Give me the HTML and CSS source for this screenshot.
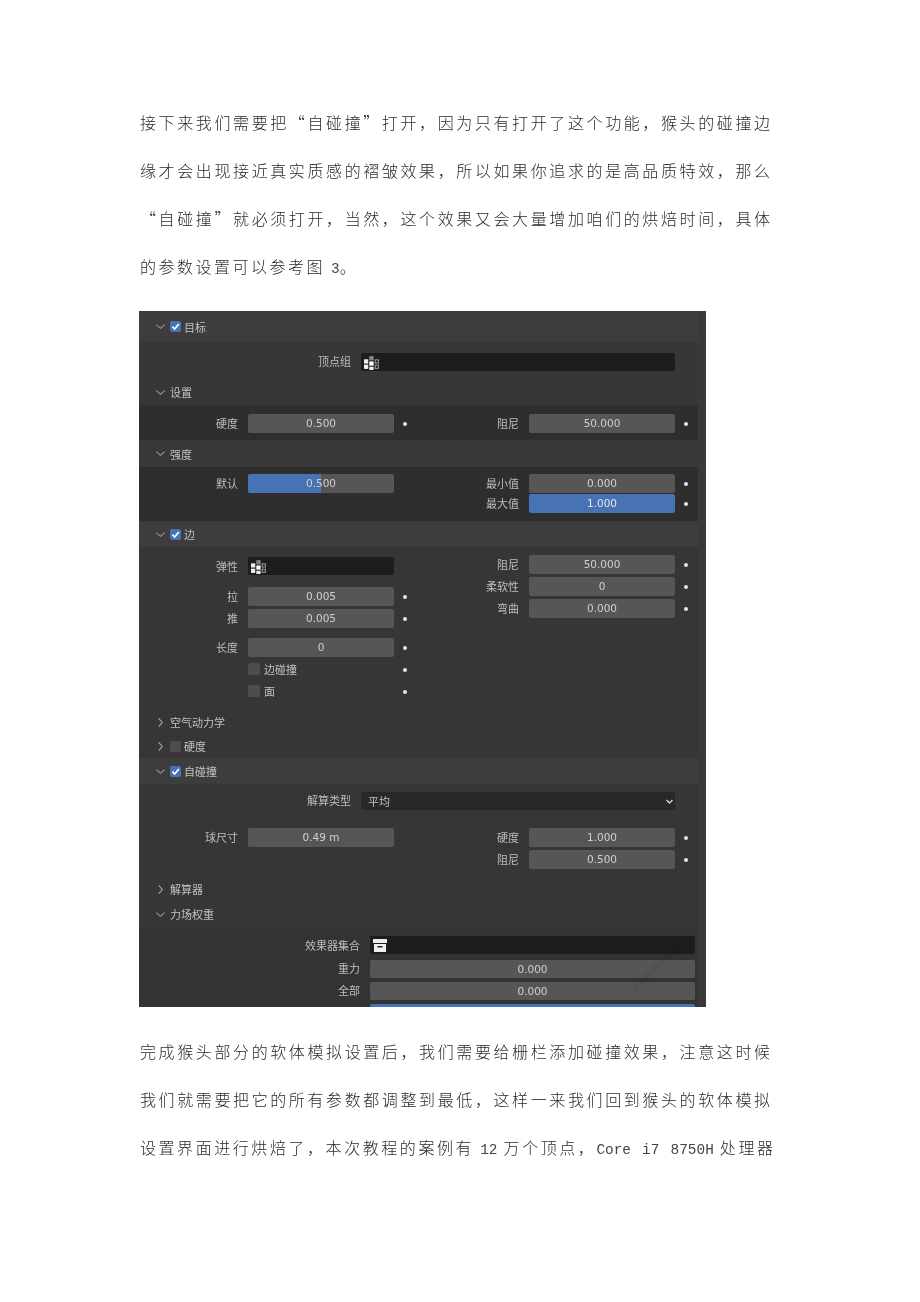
FILE: index.html
```html
<!DOCTYPE html>
<html lang="zh">
<head>
    <meta charset="utf-8">
    <title>软体模拟设置</title>
    <link rel="stylesheet" href="styles.css">
</head>
<body>
    <svg class="defs" width="0" height="0">
        <symbol id="open" viewBox="0 0 12 12"><path d="M1.5 4 L6 8 L10.5 4" fill="none" stroke="#9a9a9a" stroke-width="1.2"/></symbol>
        <symbol id="closed" viewBox="0 0 12 12"><path d="M4 1.5 L8 6 L4 10.5" fill="none" stroke="#a8a8a8" stroke-width="1.2"/></symbol>
        <symbol id="more" viewBox="0 0 12 12"><path d="M2 4 L6 8 L10 4" fill="none" stroke="#d0d0d0" stroke-width="2"/></symbol>
        <symbol id="tick" viewBox="0 0 11 11"><path d="M2.4 5.6 L4.7 8 L8.8 3" fill="none" stroke="#fff" stroke-width="1.7"/></symbol>
        <symbol id="group" viewBox="0 0 15 14">
            <rect x="0" y="4" width="4" height="4" fill="#eee"/>
            <rect x="0" y="9" width="4" height="4" fill="#eee"/>
            <rect x="5" y="6" width="4" height="4" fill="#fff"/>
            <rect x="5" y="11" width="4" height="3" fill="#eee"/>
            <rect x="5" y="1" width="4" height="4" fill="#888"/>
            <rect x="10.5" y="4.5" width="3" height="3" fill="none" stroke="#999"/>
            <rect x="10.5" y="9.5" width="3" height="3" fill="none" stroke="#999"/>
        </symbol>
        <symbol id="archive" viewBox="0 0 14 13">
            <rect x="0" y="0" width="14" height="4" fill="#eee"/>
            <path d="M1 5 H13 V13 H1 Z M4.5 7 V8.4 H9.5 V7 Z" fill="#eee" fill-rule="evenodd"/>
        </symbol>
    </svg>

    <div class="para">
        <span class="line">接下来我们需要把“自碰撞”打开&#65292;因为只有打开了这个功能&#65292;猴头的碰撞边</span>
        <span class="line">缘才会出现接近真实质感的褶皱效果&#65292;所以如果你追求的是高品质特效&#65292;那么</span>
        <span class="line">“自碰撞”就必须打开&#65292;当然&#65292;这个效果又会大量增加咱们的烘焙时间&#65292;具体</span>
        <span class="line last">的参数设置可以参考图 <span class="latin">3</span>。</span>
    </div>

    <div class="panel">
        <div class="sections">
            <div class="head head-top"><svg class="arrow"><use href="#open"/></svg><span class="check on"><svg><use href="#tick"/></svg></span>目标</div>
            <div class="body body-a">
                <div class="wide">
                    <span class="label">顶点组</span>
                    <span class="input"><svg class="group"><use href="#group"/></svg></span>
                </div>
            </div>
            <div class="head head-sub"><svg class="arrow"><use href="#open"/></svg>设置</div>
            <div class="body body-b">
                <div class="cols">
                    <div class="col">
                        <div class="row"><span class="label">硬度</span><span class="field">0.500</span><i class="dot"></i></div>
                    </div>
                    <div class="col">
                        <div class="row"><span class="label">阻尼</span><span class="field">50.000</span><i class="dot"></i></div>
                    </div>
                </div>
            </div>
            <div class="head head-mid"><svg class="arrow"><use href="#open"/></svg>强度</div>
            <div class="body body-c">
                <div class="cols">
                    <div class="col">
                        <div class="row"><span class="label">默认</span><span class="field half">0.500</span></div>
                    </div>
                    <div class="col tight">
                        <div class="row"><span class="label">最小值</span><span class="field">0.000</span><i class="dot"></i></div>
                        <div class="row"><span class="label">最大值</span><span class="field blue">1.000</span><i class="dot"></i></div>
                    </div>
                </div>
            </div>
            <div class="head head-edge"><svg class="arrow"><use href="#open"/></svg><span class="check on"><svg><use href="#tick"/></svg></span>边</div>
            <div class="body body-d">
                <div class="cols">
                    <div class="col col-low">
                        <div class="row"><span class="label">弹性</span><span class="input"><svg class="group"><use href="#group"/></svg></span></div>
                        <div class="row gap-a"><span class="label">拉</span><span class="field">0.005</span><i class="dot"></i></div>
                        <div class="row"><span class="label">推</span><span class="field">0.005</span><i class="dot"></i></div>
                        <div class="row gap-b"><span class="label">长度</span><span class="field">0</span><i class="dot"></i></div>
                        <div class="row"><span></span><span class="tick-row"><span class="check"></span>边碰撞</span><i class="dot"></i></div>
                        <div class="row"><span></span><span class="tick-row"><span class="check"></span>面</span><i class="dot"></i></div>
                    </div>
                    <div class="col">
                        <div class="row"><span class="label">阻尼</span><span class="field">50.000</span><i class="dot"></i></div>
                        <div class="row"><span class="label">柔软性</span><span class="field">0</span><i class="dot"></i></div>
                        <div class="row"><span class="label">弯曲</span><span class="field">0.000</span><i class="dot"></i></div>
                    </div>
                </div>
            </div>
            <div class="head head-plain"><svg class="arrow"><use href="#closed"/></svg>空气动力学</div>
            <div class="head head-plain short"><svg class="arrow"><use href="#closed"/></svg><span class="check"></span>硬度</div>
            <div class="head head-edge"><svg class="arrow"><use href="#open"/></svg><span class="check on"><svg><use href="#tick"/></svg></span>自碰撞</div>
            <div class="body body-e">
                <div class="wide">
                    <span class="label">解算类型</span>
                    <span class="input select">平均<svg class="drop"><use href="#more"/></svg></span>
                </div>
                <div class="cols gap-c">
                    <div class="col">
                        <div class="row"><span class="label">球尺寸</span><span class="field">0.49 m</span></div>
                    </div>
                    <div class="col">
                        <div class="row"><span class="label">硬度</span><span class="field">1.000</span><i class="dot"></i></div>
                        <div class="row"><span class="label">阻尼</span><span class="field">0.500</span><i class="dot"></i></div>
                    </div>
                </div>
            </div>
            <div class="head head-plain"><svg class="arrow"><use href="#closed"/></svg>解算器</div>
            <div class="head head-plain"><svg class="arrow"><use href="#open"/></svg>力场权重</div>
            <div class="body body-f">
                <div class="full">
                    <span class="label">效果器集合</span>
                    <span class="input"><svg class="box"><use href="#archive"/></svg></span>
                    <span class="label">重力</span>
                    <span class="field">0.000</span>
                    <span class="label">全部</span>
                    <span class="field">0.000</span>
                    <span class="label"></span>
                    <span class="field blue"></span>
                </div>
            </div>
        </div>
        <div class="mark"></div>
    </div>

    <div class="para para-low">
        <span class="line">完成猴头部分的软体模拟设置后&#65292;我们需要给栅栏添加碰撞效果&#65292;注意这时候</span>
        <span class="line">我们就需要把它的所有参数都调整到最低&#65292;这样一来我们回到猴头的软体模拟</span>
        <span class="line wider">设置界面进行烘焙了&#65292;本次教程的案例有 <span class="latin">12</span> 万个顶点&#65292;<span class="latin">Core i7 8750H</span> 处理器</span>
    </div>
</body>
</html>
```

FILE: styles.css
```css
body {
    margin: 0;
    padding: 98px 0 130px 140px;
    background: #fff;
    font-family: "Noto Sans CJK SC", sans-serif;
}

.defs {
    position: absolute;
}

.para {
    width: 630px;
    font-size: 16px;
    font-weight: 300;
    line-height: 48px;
    color: #2a2a2a;
    filter: blur(0.35px);
}

.para-low {
    margin-top: 20px;
}

.line {
    display: block;
    height: 48px;
    white-space: nowrap;
    text-align: justify;
    text-align-last: justify;
}

.last {
    text-align-last: left;
    letter-spacing: 2.5px;
}

.wider {
    width: 633px;
}

.latin {
    font-family: "Liberation Mono", monospace;
    font-size: 14.4px;
    letter-spacing: 0;
    color: #444;
}

.panel {
    position: relative;
    width: 567px;
    height: 696px;
    margin: 21px 0 0 -1px;
    overflow: hidden;
    background: #393939;
    font-size: 11px;
    line-height: 16px;
    color: #c2c2c2;
    filter: blur(0.45px);
}

/* faint watermark over the lower right fields */
.mark {
    position: absolute;
    left: 485px;
    top: 654px;
    width: 62px;
    height: 7px;
    background: rgba(0, 0, 0, 0.035);
    transform: rotate(-45deg);
}

.sections {
    width: 559px;
}

.head {
    display: flex;
    align-items: center;
    height: 25px;
    padding-left: 16px;
    background: #363636;
}

.head-top {
    height: 31px;
    background: #3d3d3d;
}

.head-sub {
    padding-bottom: 1px;
    box-sizing: border-box;
    background: #373737;
}

.head-mid {
    height: 27px;
    background: #383838;
}

.head-edge {
    height: 26px;
    background: #3d3d3d;
}

.head-plain {
    padding-bottom: 1px;
    box-sizing: border-box;
    background: #363636;
}

.short {
    height: 23px;
}

.arrow {
    width: 11px;
    height: 11px;
    margin-right: 4px;
}

.check {
    display: inline-block;
    width: 11px;
    height: 11px;
    margin-right: 3px;
    border-radius: 2px;
    background: #4d4d4d;
}

.check.on {
    background: #4772b3;
}

.check svg {
    display: block;
    width: 11px;
    height: 11px;
}

.body {
    background: #363636;
}

.body-a {
    height: 38px;
    padding-top: 11px;
    box-sizing: border-box;
    background: #373737;
}

.body-b {
    height: 35px;
    padding-top: 9px;
    box-sizing: border-box;
    background: #2e2e2e;
}

.body-c {
    height: 54px;
    padding-top: 7px;
    box-sizing: border-box;
    background: #2e2e2e;
}

.body-d {
    height: 163px;
    padding-top: 8px;
    box-sizing: border-box;
}

.body-e {
    height: 93px;
    padding-top: 8px;
    box-sizing: border-box;
}

.body-f {
    height: 80px;
    padding-top: 9px;
    box-sizing: border-box;
    background: #333;
}

.cols {
    display: flex;
}

.col {
    display: flex;
    flex-direction: column;
    gap: 3px;
    width: 281px;
}

.tight {
    gap: 1px;
}

.col-low {
    padding-top: 2px;
}

.gap-a {
    margin-top: 8px;
}

.gap-b {
    margin-top: 7px;
}

.gap-c {
    margin-top: 18px;
}

.row {
    display: grid;
    grid-template-columns: 99px 146px 22px;
    column-gap: 10px;
    align-items: center;
    height: 19px;
}

.row .input {
    align-self: start;
}

.wide {
    display: grid;
    grid-template-columns: 212px 314px;
    column-gap: 10px;
    align-items: center;
    height: 18px;
}

.full {
    display: grid;
    grid-template-columns: 221px 325px;
    column-gap: 10px;
    row-gap: 4px;
    align-items: center;
}

.full .input {
    margin-bottom: 2px;
}

.full .field {
    height: 18px;
}

.label {
    padding-bottom: 2px;
    text-align: right;
    color: #bdbdbd;
}

.field {
    display: block;
    height: 19px;
    border-radius: 2px;
    background: #565656;
    text-align: center;
    font-family: "DejaVu Sans", sans-serif;
    font-size: 10.5px;
    line-height: 18px;
    color: #d0d0d0;
}

.half {
    background: linear-gradient(to right, #4772b3 50%, #565656 50%);
}

.blue {
    background: #4772b3;
    color: #dfe8f5;
}

.input {
    display: flex;
    align-items: center;
    height: 18px;
    border-radius: 2px;
    background: #1d1d1d;
}

.select {
    justify-content: space-between;
    padding: 0 0 0 7px;
    background: #282828;
}

.group {
    width: 16px;
    height: 15px;
    margin-left: 3px;
}

.box {
    width: 14px;
    height: 13px;
    margin-left: 3px;
}

.drop {
    width: 9px;
    height: 9px;
    margin-right: 1px;
}

.tick-row {
    display: flex;
    align-items: center;
    padding-bottom: 1px;
}

.tick-row .check {
    width: 12px;
    height: 12px;
    margin-right: 4px;
}

.dot {
    justify-self: start;
    width: 4px;
    height: 4px;
    margin-left: -1px;
    border-radius: 50%;
    background: #e6e6e6;
}
```
